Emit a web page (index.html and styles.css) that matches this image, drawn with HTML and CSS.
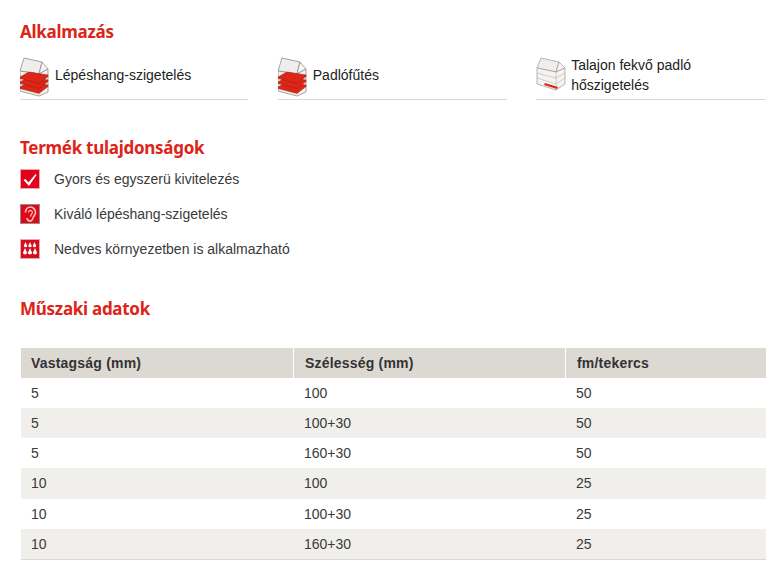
FILE: index.html
```html
<!DOCTYPE html>
<html lang="hu">
<head>
<meta charset="utf-8">
<title>Termék</title>
<link rel="stylesheet" href="styles.css">
</head>
<body>
<main class="page">
  <h2 class="heading heading-first">Alkalmazás</h2>
  <div class="apps">
    <div class="app">
      <svg class="house" viewBox="0 0 30 40"><path d="M4 1 22 5 19 17 0 14Z" fill="#efeeec" stroke="#8f8c88" stroke-width=".8"/><path d="M22 5 28 12 19 17Z" fill="#f7f6f5" stroke="#8f8c88" stroke-width=".8"/><path d="M0 14V34L19 39 28 35V12L19 17Z" fill="#f3f2f0" stroke="#8f8c88" stroke-width=".8"/><g fill="#de2618" stroke="#8e2016" stroke-width=".5" stroke-linejoin="round"><path d="M0 30 9 25 28 28V29.500L19 36.500 0 31.500Z"/><path d="M0 25 9 20 28 23V24.500L19 31.500 0 26.500Z"/><path d="M0 20 9 15 28 18V19.500L19 26.500 0 21.500Z"/></g></svg>
      <span class="app-label">Lépéshang-szigetelés</span>
    </div>
    <div class="app">
      <svg class="house" viewBox="0 0 30 40"><path d="M4 1 22 5 19 17 0 14Z" fill="#efeeec" stroke="#8f8c88" stroke-width=".8"/><path d="M22 5 28 12 19 17Z" fill="#f7f6f5" stroke="#8f8c88" stroke-width=".8"/><path d="M0 14V34L19 39 28 35V12L19 17Z" fill="#f3f2f0" stroke="#8f8c88" stroke-width=".8"/><g fill="#de2618" stroke="#8e2016" stroke-width=".5" stroke-linejoin="round"><path d="M0 30 9 25 28 28V29.500L19 36.500 0 31.500Z"/><path d="M0 25 9 20 28 23V24.500L19 31.500 0 26.500Z"/><path d="M0 20 9 15 28 18V19.500L19 26.500 0 21.500Z"/></g></svg>
      <span class="app-label">Padlófűtés</span>
    </div>
    <div class="app">
      <svg class="house" viewBox="0 0 30 40"><path d="M5 1 23 5 20 15 1 11Z" fill="#efeeec" stroke="#9b9894" stroke-width=".7"/><path d="M23 5 29 11 20 15Z" fill="#f7f6f5" stroke="#9b9894" stroke-width=".7"/><path d="M1 11V27L20 33 29 27V11L20 15Z" fill="#f5f4f2" stroke="#9b9894" stroke-width=".7"/><path d="M1 16 20 21 29 16M1 21 20 27 29 21M20 15V33" fill="none" stroke="#b5b2ad" stroke-width=".6"/><path d="M9 26 22 30 21 32 8 28Z" fill="#de2618"/></svg>
      <span class="app-label">Talajon fekvő padló hőszigetelés</span>
    </div>
  </div>
  <h2 class="heading heading-props">Termék tulajdonságok</h2>
  <ul class="props">
    <li class="prop">
      <svg class="badge" viewBox="0 0 20 20"><rect x=".5" y=".5" width="19" height="19" fill="#e2001a" stroke="#f0a6a6"/><path d="M3.500 11 5.500 10 8.500 13.500 15.500 5 16.500 6 9 17Z" fill="#fff"/></svg>
      <span>Gyors és egyszerü kivitelezés</span>
    </li>
    <li class="prop">
      <svg class="badge" viewBox="0 0 20 20"><rect x=".5" y=".5" width="19" height="19" fill="#e0071b" stroke="#8f8f8f"/><path d="M5.500 8.500C5.500 5 8 3 10.500 3S15.500 5.500 15.500 8.500C15.500 11 13.500 12 13 14S11 17.500 9.500 17 7 15 7 14" fill="none" stroke="#f8c4b4" stroke-width="1.600"/><path d="M8.500 8.500C8.500 6.800 10 6 11 6.500S12.800 8 12 9.500 10.500 11 10.500 12.500" fill="none" stroke="#f8c4b4" stroke-width="1.200"/></svg>
      <span>Kiváló lépéshang-szigetelés</span>
    </li>
    <li class="prop">
      <svg class="badge" viewBox="0 0 20 20"><rect x=".5" y=".5" width="19" height="19" fill="#d50d1d" stroke="#f0a6a6"/><g fill="#fff"><path d="M5.500 3 7.300 7A1.900 1.900 0 0 1 3.700 7Z"/><path d="M10 3 11.800 7A1.900 1.900 0 0 1 8.200 7Z"/><path d="M14.500 3 16.300 7A1.900 1.900 0 0 1 12.700 7Z"/><path d="M5 9 7.200 14A2.400 2.400 0 0 1 2.800 14Z"/><path d="M10 9 12.200 14A2.400 2.400 0 0 1 7.800 14Z"/><path d="M15 9 17.200 14A2.400 2.400 0 0 1 12.800 14Z"/></g></svg>
      <span>Nedves környezetben is alkalmazható</span>
    </li>
  </ul>
  <h2 class="heading heading-tech">Műszaki adatok</h2>
  <table class="specs">
    <colgroup><col class="col-a"><col class="col-b"><col class="col-c"></colgroup>
    <thead>
      <tr><th>Vastagság (mm)</th><th>Szélesség (mm)</th><th>fm/tekercs</th></tr>
    </thead>
    <tbody>
      <tr><td>5</td><td>100</td><td>50</td></tr>
      <tr><td>5</td><td>100+30</td><td>50</td></tr>
      <tr><td>5</td><td>160+30</td><td>50</td></tr>
      <tr class="row-tall"><td>10</td><td>100</td><td>25</td></tr>
      <tr><td>10</td><td>100+30</td><td>25</td></tr>
      <tr><td>10</td><td>160+30</td><td>25</td></tr>
    </tbody>
  </table>
</main>
</body>
</html>
```
FILE: styles.css
```css
* { box-sizing: border-box; }
html, body { margin: 0; background: #fff; }
body { font-family: "Liberation Sans", Arial, sans-serif; font-size: 14px; color: #2f2f2f; }
.page { padding: 0 16px 0 20px; width: 782px; height: 572px; overflow: hidden; }
.heading { margin: 0; font-family: "Noto Sans", sans-serif; font-weight: 700; font-size: 17px; letter-spacing: -.28px; line-height: 24px; color: #dc2418; }
.heading-first { padding-top: 20px; height: 44px; }
.heading-props { margin-top: 36px; }
.heading-tech { margin-top: 31px; }
.apps { display: grid; grid-template-columns: 228.4px 229px 229.8px; column-gap: 29.4px; margin-top: 11px; }
.app { display: flex; align-items: center; height: 45px; border-bottom: 1px solid #dcd9d3; color: #222; line-height: 20px; }
.app-label { max-width: 170px; margin-bottom: 4px; }
.house { width: 30px; height: 40px; margin-right: 5px; flex: none; }
.props { list-style: none; margin: 1px 0 0; padding: 0; }
.prop { display: flex; align-items: center; height: 35px; font-size: 14px; color: #3a3a3a; }
.badge { width: 20px; height: 20px; margin-right: 14px; flex: none; }
.specs { border-collapse: separate; border-spacing: 0; table-layout: fixed; width: 745px; margin: 27px 0 0 1px; border-bottom: 1px solid #dcd9d3; }
.col-a, .col-b { width: 272px; }
.col-c { width: 201px; }
.specs th { background: #dcd9d3; height: 30px; padding: 0 0 0 11px; text-align: left; font-size: 14px; font-weight: 700; letter-spacing: .2px; color: #333; border-left: 1px solid #fff; }
.specs th:first-child { border-left: 0; padding-left: 10px; }
.specs td { height: 30px; padding: 0 0 0 11px; font-size: 14px; color: #3a3a3a; }
.specs td:first-child { padding-left: 10px; }
.specs tbody tr:nth-child(2) td, .specs tbody tr:nth-child(4) td, .specs tbody tr:nth-child(6) td { background: #f0efec; }
.specs .row-tall td { height: 31px; padding-bottom: 2px; }
```
